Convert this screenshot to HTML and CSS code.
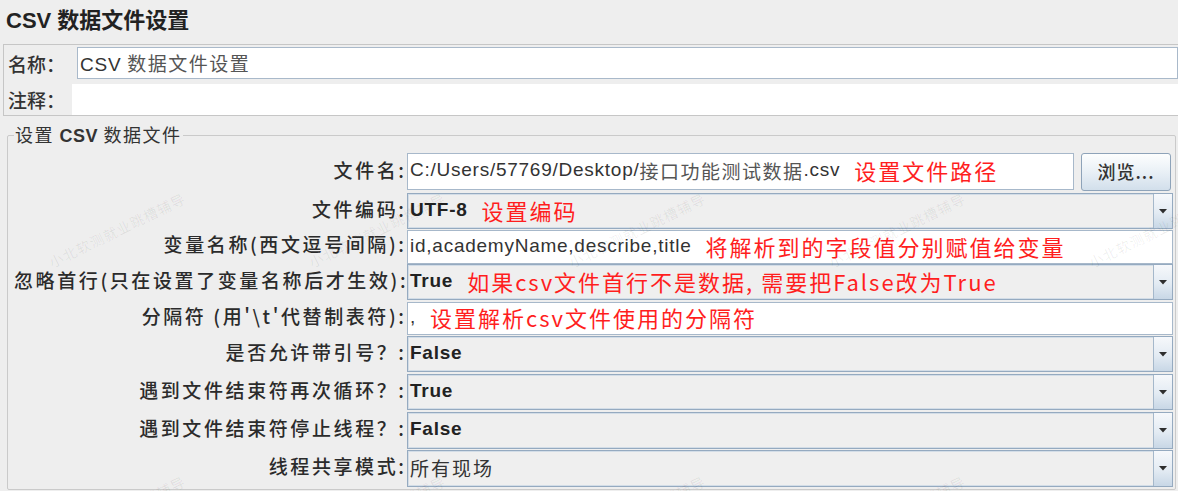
FILE: index.html
```html
<!DOCTYPE html>
<html lang="zh-CN">
<head>
<meta charset="utf-8">
<title>CSV 数据文件设置</title>
<link rel="stylesheet" href="styles.css">
</head>
<body>
<div class="page">
  <h1 class="title">CSV 数据文件设置</h1>

  <div class="name-panel">
    <div class="np-row first">
      <span class="np-label">名称：</span>
      <div class="np-input">CSV <span class="cn">数据文件设置</span></div>
    </div>
    <div class="np-row second">
      <span class="np-label">注释：</span>
      <div class="np-comment"></div>
    </div>
  </div>

  <fieldset class="group">
    <legend>设置 <b>CSV</b> 数据文件</legend>
    <div class="form">
      <label class="lbl">文件名:</label>
      <div class="file-row">
        <div class="field h37">C:/Users/57769/Desktop/<span class="cn">接口功能测试数据</span>.csv<span class="note">设置文件路径</span></div>
        <button class="browse">浏览...</button>
      </div>

      <label class="lbl">文件编码:</label>
      <div class="combo h36"><div class="val"><span class="b">UTF-8</span><span class="note">设置编码</span></div><div class="arrow"><svg width="8" height="5" viewBox="0 0 8 5"><polygon points="0,0 8,0 4,4.5" fill="#2e2e2e"/></svg></div></div>

      <label class="lbl">变量名称(西文逗号间隔):</label>
      <div class="field h34">id,academyName,describe,title<span class="note">将解析到的字段值分别赋值给变量</span></div>

      <label class="lbl">忽略首行(只在设置了变量名称后才生效):</label>
      <div class="combo h36"><div class="val"><span class="b">True</span><span class="note">如果csv文件首行不是数据, 需要把False改为True</span></div><div class="arrow"><svg width="8" height="5" viewBox="0 0 8 5"><polygon points="0,0 8,0 4,4.5" fill="#2e2e2e"/></svg></div></div>

      <label class="lbl">分隔符 (用'\t'代替制表符):</label>
      <div class="field h33">,<span class="note">设置解析csv文件使用的分隔符</span></div>

      <label class="lbl">是否允许带引号？:</label>
      <div class="combo h36"><div class="val"><span class="b">False</span></div><div class="arrow"><svg width="8" height="5" viewBox="0 0 8 5"><polygon points="0,0 8,0 4,4.5" fill="#2e2e2e"/></svg></div></div>

      <label class="lbl">遇到文件结束符再次循环？:</label>
      <div class="combo h36"><div class="val"><span class="b">True</span></div><div class="arrow"><svg width="8" height="5" viewBox="0 0 8 5"><polygon points="0,0 8,0 4,4.5" fill="#2e2e2e"/></svg></div></div>

      <label class="lbl">遇到文件结束符停止线程？:</label>
      <div class="combo h37"><div class="val"><span class="b">False</span></div><div class="arrow"><svg width="8" height="5" viewBox="0 0 8 5"><polygon points="0,0 8,0 4,4.5" fill="#2e2e2e"/></svg></div></div>

      <label class="lbl">线程共享模式:</label>
      <div class="combo h37"><div class="val"><span class="cnv">所有现场</span></div><div class="arrow"><svg width="8" height="5" viewBox="0 0 8 5"><polygon points="0,0 8,0 4,4.5" fill="#2e2e2e"/></svg></div></div>
    </div>
  </fieldset>

  <span class="wm" style="left:117px;top:230px">小北软测就业跳槽辅导</span>
  <span class="wm" style="left:377px;top:230px">小北软测就业跳槽辅导</span>
  <span class="wm" style="left:637px;top:230px">小北软测就业跳槽辅导</span>
  <span class="wm" style="left:897px;top:230px">小北软测就业跳槽辅导</span>
  <span class="wm" style="left:1157px;top:230px">小北软测就业跳槽辅导</span>
  <span class="wm" style="left:117px;top:513px">小北软测就业跳槽辅导</span>
  <span class="wm" style="left:377px;top:513px">小北软测就业跳槽辅导</span>
  <span class="wm" style="left:637px;top:513px">小北软测就业跳槽辅导</span>
  <span class="wm" style="left:897px;top:513px">小北软测就业跳槽辅导</span>
</div>
</body>
</html>
```

FILE: styles.css
```css
* { box-sizing: border-box; }

html, body {
  margin: 0;
  background: #eeeeee;
}

body {
  font-family: "Liberation Sans", "Noto Sans CJK SC", sans-serif;
  color: #333;
}

.page {
  position: relative;
  width: 1178px;
  height: 491px;
  overflow: hidden;
}

.title {
  margin: 0;
  height: 44px;
  line-height: 42px;
  padding-left: 6px;
  font-size: 22px;
  font-weight: bold;
  color: #222;
  letter-spacing: 0;
}

/* name / comment panel */
.name-panel {
  margin: 0 -4px 0 3px;
  border: 1px solid #c6c6c6;
  padding: 2px 0 0 4px;
  height: 72px;
}

.np-row {
  display: flex;
  align-items: center;
}

.np-row.first { height: 32px; }
.np-row.second { height: 31px; margin-top: 5px; }

.np-label {
  font-family: "Noto Sans CJK SC", sans-serif;
  font-size: 19px;
  color: #333;
  font-weight: 500;
}

.first .np-label { width: 69px; }
.second .np-label { width: 64px; }

.np-input {
  flex: 1;
  height: 32px;
  margin-right: 3px;
  border: 1px solid #a9b9ca;
  background: #fff;
  font-size: 19px;
  letter-spacing: 0.75px;
  padding-left: 2px;
  line-height: 30px;
  color: #333;
}

.np-input .cn,
.field .cn {
  font-family: "Noto Sans CJK SC", sans-serif;
  color: #555;
  letter-spacing: 1.5px;
}

.np-comment {
  flex: 1;
  height: 31px;
  background: #fff;
}

/* group */
.group {
  margin: 6px 2px 0 7px;
  padding: 0 1px 1px 6px;
  border: 1px solid #cacaca;
  border-radius: 2px;
  min-width: 0;
}

.group legend {
  padding: 0 1px;
  font-family: "Noto Sans CJK SC", sans-serif;
  font-size: 18px;
  line-height: 24px;
  letter-spacing: 1.5px;
  color: #333;
}

.group legend b {
  font-family: "Liberation Sans", sans-serif;
  font-weight: bold;
  letter-spacing: 0.5px;
}

.form {
  margin-top: 5px;
  display: grid;
  grid-template-columns: 390px 1fr;
  column-gap: 3px;
  grid-template-rows: 40px 37px 34px 38px 34px 38px 38px 38px 38px;
}

.lbl {
  align-self: center;
  text-align: right;
  white-space: nowrap;
  font-family: "Noto Sans CJK SC", sans-serif;
  font-size: 19px;
  font-weight: 500;
  letter-spacing: 2.6px;
  color: #2b2b2b;
  margin-right: -2.6px;
  padding-bottom: 7px;
}

.file-row {
  display: flex;
  gap: 6px;
  align-items: flex-start;
}

.field {
  align-self: start;
  flex: 1;
  display: flex;
  align-items: center;
  background: #fff;
  border: 1px solid #a7b8ca;
  padding: 0 0 3px 2px;
  font-size: 19px;
  letter-spacing: 0.75px;
  color: #333;
  white-space: nowrap;
  overflow: hidden;
  margin-right: 1px;
}

.combo {
  align-self: start;
  display: flex;
  align-items: stretch;
  background: #efefef;
  border: 1px solid #95aac0;
  box-shadow: inset 0 0 0 1px #d3dde7;
  margin-right: 1px;
  font-size: 19px;
  letter-spacing: 0.75px;
  color: #222;
}

.combo .val {
  flex: 1;
  display: flex;
  align-items: center;
  padding: 0 0 3px 2px;
  white-space: nowrap;
  overflow: hidden;
}

.combo .arrow {
  width: 19px;
  border-left: 1px solid #a5b8cb;
  background: linear-gradient(#f6f8fb, #e3ebf3 55%, #c8d7e6);
  display: flex;
  align-items: center;
  justify-content: center;
}

.combo .arrow svg { display: block; }

.b { font-weight: bold; }

.cnv {
  font-family: "Noto Sans CJK SC", sans-serif;
  letter-spacing: 2px;
  color: #333;
}

.h33 { height: 33px; }
.h34 { height: 34px; }
.h36 { height: 36px; }
.h37 { height: 37px; }

.note {
  font-family: "Noto Sans CJK SC", sans-serif;
  font-size: 22px;
  font-weight: normal;
  letter-spacing: 2px;
  color: #ff1e1e;
  margin-left: 14px;
}

.browse {
  width: 90px;
  height: 38px;
  margin-right: 3px;
  padding: 0 0 2px;
  border: 1px solid #8ea3b9;
  border-radius: 3px;
  background: linear-gradient(#fdfefe, #e9f0f6 50%, #d2dfeb);
  font-family: "Noto Sans CJK SC", sans-serif;
  font-size: 18px;
  font-weight: 500;
  letter-spacing: 1px;
  color: #333;
}

.wm {
  position: absolute;
  font-family: "Noto Sans CJK SC", sans-serif;
  font-size: 14px;
  letter-spacing: 1px;
  color: rgba(0, 0, 0, 0.07);
  white-space: nowrap;
  transform: translate(-50%, -50%) rotate(-26deg);
  pointer-events: none;
}
```
